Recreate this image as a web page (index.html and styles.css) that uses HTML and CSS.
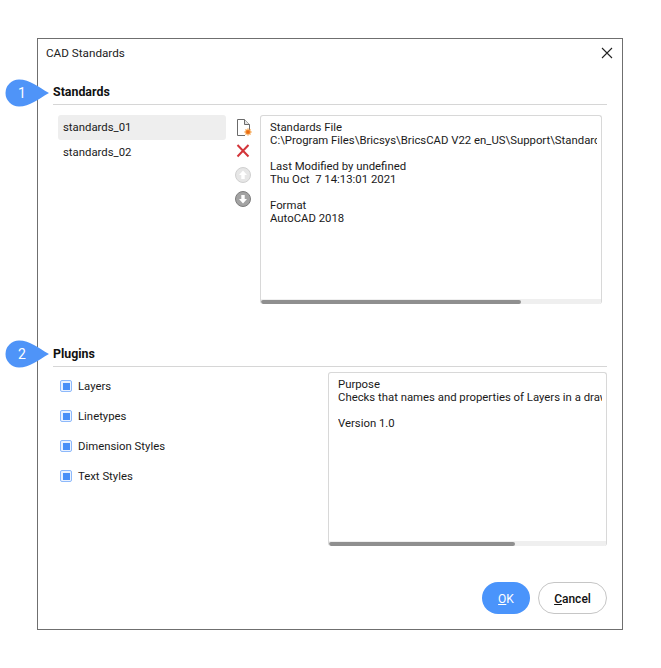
FILE: index.html
```html
<!DOCTYPE html>
<html lang="en">
<head>
<meta charset="utf-8">
<title>CAD Standards</title>
<link rel="stylesheet" href="styles.css">
</head>
<body>
<div class="stage">
  <div class="dialog">
    <header class="titlebar">
      <span class="title">CAD Standards</span>
      <svg class="close" width="12" height="12" viewBox="0 0 12 12"><path d="M1 1L11 11M11 1L1 11" stroke="#222" stroke-width="1.1" fill="none"/></svg>
    </header>

    <section class="section standards">
      <h2 class="heading">Standards</h2>
      <div class="standards-body">
        <ul class="list">
          <li class="list-item selected">standards_01</li>
          <li class="list-item">standards_02</li>
        </ul>
        <div class="tools">
          <svg class="tool" width="18" height="18" viewBox="0 0 18 18">
            <path d="M3.5 1.5H10.5L15.5 6.5V12M11 17.5H3.5V1.5" fill="#fff" stroke="#6b6b6b" stroke-width="1"/>
            <path d="M10.5 1.5V6.5H15.5" fill="#e4e4e4" stroke="#6b6b6b" stroke-width="1"/>
            <path d="M14 10.5V17.5M10.5 14H17.5M11.5 11.5L16.5 16.5M16.5 11.5L11.5 16.5" stroke="#f49a3c" stroke-width="1.3"/>
            <circle cx="14" cy="14" r="1.8" fill="#ea6a12"/>
          </svg>
          <svg class="tool" width="18" height="18" viewBox="0 0 18 18"><path d="M3.5 3L14.5 14.5M14.5 3L3.5 14.5" stroke="#d3353a" stroke-width="2" fill="none"/></svg>
          <svg class="tool" width="18" height="18" viewBox="0 0 18 18">
            <circle cx="9" cy="9" r="7.5" fill="#e6e6e6" stroke="#d0d0d0"/>
            <path d="M9 4.5L13 9H10.7V13H7.3V9H5Z" fill="#fff"/>
          </svg>
          <svg class="tool" width="18" height="18" viewBox="0 0 18 18">
            <circle cx="9" cy="9" r="7.5" fill="#a3a3a3" stroke="#7d7d7d"/>
            <path d="M9 13.5L13 9H10.7V5H7.3V9H5Z" fill="#fff"/>
          </svg>
        </div>
        <div class="infobox info-standards">
          <div class="info-text">
            <p>Standards File<br>C:\Program Files\Bricsys\BricsCAD V22 en_US\Support\Standards\Layers.dws</p>
            <p>Last Modified by undefined<br>Thu Oct &nbsp;7 14:13:01 2021</p>
            <p>Format<br>AutoCAD 2018</p>
          </div>
          <div class="scrollbar"><div class="thumb thumb-standards"></div></div>
        </div>
      </div>
    </section>

    <section class="section plugins">
      <h2 class="heading">Plugins</h2>
      <div class="plugins-body">
        <ul class="checks">
          <li class="check"><span class="box"></span>Layers</li>
          <li class="check"><span class="box"></span>Linetypes</li>
          <li class="check"><span class="box"></span>Dimension Styles</li>
          <li class="check"><span class="box"></span>Text Styles</li>
        </ul>
        <div class="infobox info-plugins">
          <div class="info-text">
            <p>Purpose<br>Checks that names and properties of Layers in a drawing match the standards.</p>
            <p>Version 1.0</p>
          </div>
          <div class="scrollbar"><div class="thumb thumb-plugins"></div></div>
        </div>
      </div>
    </section>

    <footer class="footer">
      <button class="btn btn-ok"><u>O</u>K</button>
      <button class="btn btn-cancel"><u>C</u>ancel</button>
    </footer>
  </div>

  <div class="callout callout-1"><svg width="50" height="28" viewBox="0 0 50 28"><path d="M14 0.5C25 0.5 33 8 44 14C33 20 25 27.5 14 27.5A13.5 13.5 0 0 1 14 0.5Z" fill="#4f94f8"/></svg><span>1</span></div>
  <div class="callout callout-2"><svg width="50" height="28" viewBox="0 0 50 28"><path d="M14 0.5C25 0.5 33 8 44 14C33 20 25 27.5 14 27.5A13.5 13.5 0 0 1 14 0.5Z" fill="#4f94f8"/></svg><span>2</span></div>
</div>
</body>
</html>
```

FILE: styles.css
```css
* { box-sizing: border-box; }
html, body { margin: 0; padding: 0; background: #fff; }
body { font-family: Roboto, "Liberation Sans", sans-serif; font-size: 11.35px; color: #1a1a1a; }
.stage { position: relative; width: 661px; height: 668px; padding: 38px 0 0 37px; }
.dialog { width: 586px; height: 592px; border: 1px solid #6f6f6f; background: #fff; padding: 0 15px; display: flex; flex-direction: column; }
.titlebar { height: 27px; display: flex; align-items: center; justify-content: space-between; margin-right: -6px; }
.title { margin-left: -7px; font-size: 11.7px; color: #222; }
.close { display: block; }
.section { display: flex; flex-direction: column; }
.standards { margin-top: 19px; height: 263px; }
.heading { margin: 0; height: 20px; line-height: 13px; font-size: 12.4px; font-weight: 700; color: #111; border-bottom: 1px solid #d6d6d6; }
.plugins .heading { height: 19px; line-height: 11px; }
.standards-body { display: flex; padding: 10px 5px 0 5px; }
.list { list-style: none; margin: 0; padding: 0; width: 168px; }
.list-item { height: 25px; line-height: 25px; padding-left: 5px; border-radius: 3px; }
.list-item.selected { background: #eeeeee; }
.tools { width: 34px; display: flex; flex-direction: column; align-items: center; gap: 6px; padding-top: 3px; }
.tool { display: block; }
.infobox { position: relative; border: 1px solid #d8d8d8; border-bottom: 0; border-radius: 3px; overflow: hidden; display: flex; flex-direction: column; background: #fff; }
.info-standards { width: 342px; height: 189px; }
.info-plugins { width: 279px; height: 174px; }
.info-text { flex: 1; margin: 0 4px 0 9px; padding-top: 5px; line-height: 13px; white-space: nowrap; overflow: hidden; }
.info-text p { margin: 0 0 13px; }
.scrollbar { height: 5px; padding-top: 1px; background: #efefef; flex: none; }
.thumb { height: 4px; background: #8f8f8f; border-radius: 2px; }
.thumb-standards { width: 260px; }
.thumb-plugins { width: 186px; }
.plugins-body { display: flex; justify-content: space-between; padding-top: 5px; }
.checks { list-style: none; margin: -1px 0 0; padding: 0 0 0 7px; }
.check { height: 30px; display: flex; align-items: center; gap: 6px; }
.box { width: 12px; height: 12px; border: 1px solid #8db9fb; border-radius: 2px; background: linear-gradient(#4a90f7, #4a90f7) center / 7px 7px no-repeat #eaf2ff; }
.footer { margin-top: auto; display: flex; justify-content: flex-end; gap: 8px; padding-bottom: 15px; }
.btn { height: 32px; border-radius: 16px; font-family: Roboto, "Liberation Sans", sans-serif; font-size: 12px; font-weight: 500; padding: 2px 0 0; }
.btn-ok { width: 48px; background: #4a94fb; border: none; color: #fff; font-weight: 400; }
.btn-cancel { width: 69px; background: #fff; border: 1px solid #c6c6c6; color: #111; }
.callout { position: absolute; left: 5px; width: 50px; height: 28px; }
.callout svg { display: block; }
.callout span { position: absolute; left: 0; top: 0; width: 34px; height: 28px; line-height: 28px; text-align: center; color: #fff; font-size: 14px; }
.callout-1 { top: 79px; }
.callout-2 { top: 340px; }
```
